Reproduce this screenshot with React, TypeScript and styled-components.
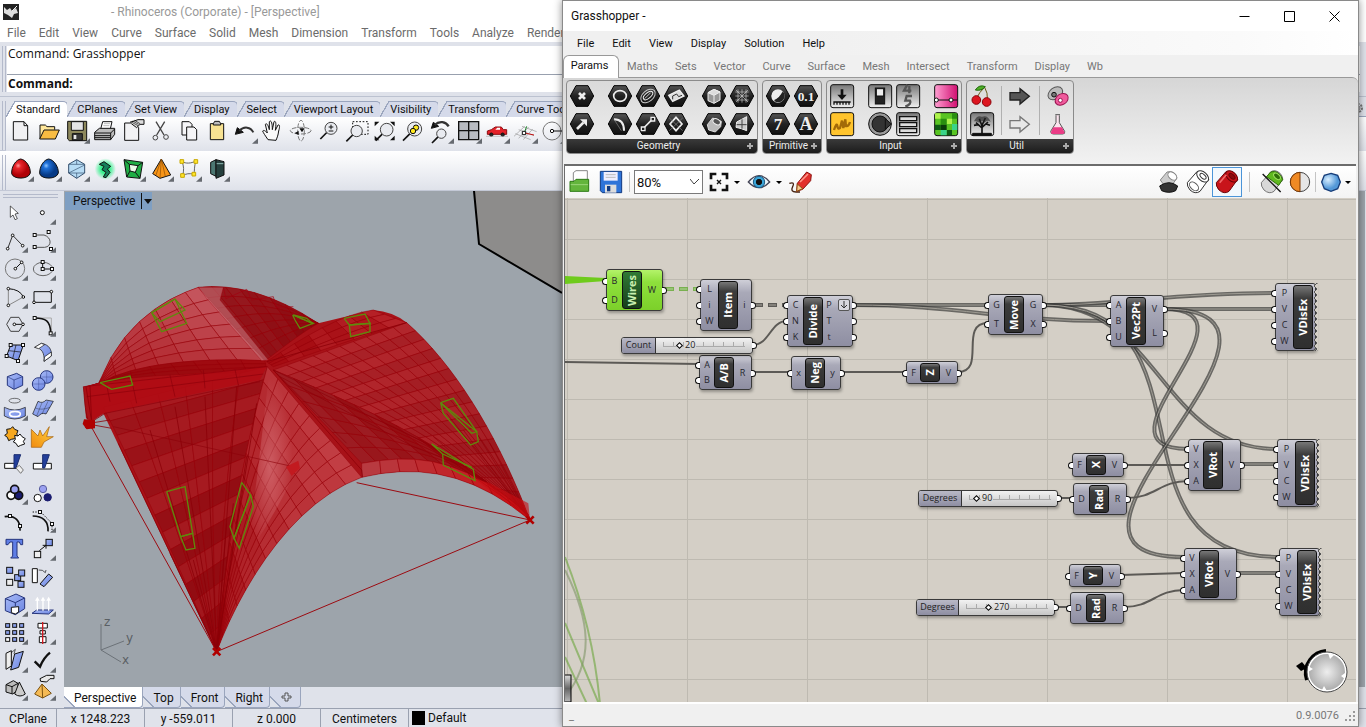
import React from "react";
import styled, { createGlobalStyle, css } from "styled-components";

const Global = createGlobalStyle`
  *, *::before, *::after { box-sizing: border-box; }
  body { margin: 0; background: #dfe2ea; font-family: Roboto, "Open Sans", sans-serif; font-size: 12px; color: #111; overflow: hidden; }
  button { font: inherit; color: inherit; background: none; border: 0; padding: 0; margin: 0; }
  svg { display: block; flex: none; }
`;

/* ---------- shared ---------- */

const Desktop = styled.div`
  position: relative;
  display: flex;
  flex-direction: column;
  height: 100vh;
  overflow: hidden;
`;

const Icon84 = styled.svg.attrs({ viewBox: "0 0 84 84", fill: "none", stroke: "#111", strokeWidth: 3 })`
  width: 28px;
  height: 28px;
`;

const ToolButton = styled.button`
  display: block;
  width: 28px;
  height: 28px;
  flex: none;
`;

type Glyph = { name: string; art: React.ReactNode; fly?: boolean };

const Tool = ({ name, art, fly }: Glyph) => (
  <ToolButton aria-label={name}>
    <Icon84>
      {art}
      {fly && <path d="M84 64V80H66Z" fill="#666a70" stroke="none" />}
    </Icon84>
  </ToolButton>
);

/* ---------- modelling window ---------- */

const RhinoTitle = styled.header`
  display: flex;
  align-items: center;
  height: 24px;
  padding-left: 3px;
  gap: 92px;
  background: #fff;
  color: #999;
  flex: none;
`;

const RhinoMenu = styled.nav`
  display: flex;
  gap: 13px;
  height: 18px;
  padding-left: 7px;
  background: #fff;
  color: #6b6b6b;
  white-space: nowrap;
  flex: none;
`;

const Grip = styled.div`
  border: solid #b4bacb;
  border-width: 0 1px;
  width: 4px;
  flex: none;
  margin: 0 1px 0 2px;
`;

const CommandArea = styled.section`
  display: flex;
  height: 55px;
  padding: 4px 6px 4px 0;
  border-bottom: 1px solid #bcc2d0;
  background: #dfe2ea;
  flex: none;
`;
const CommandStack = styled.div`
  display: flex;
  flex-direction: column;
  flex: 1;
  background: #fff;
`;
const History = styled.p`
  margin: 0;
  height: 29px;
  padding: 0 1px;
  border-bottom: 1px solid #98a0ae;
  font: 12px/16px "Open Sans", sans-serif;
`;
const Prompt = styled.label`
  display: flex;
  padding: 0 1px;
  font: 700 12px/17px "Open Sans", sans-serif;
  input { flex: 1; border: 0; padding: 0 4px; background: none; outline: 0; font: inherit; }
`;

const Bar = styled.section<{ $h: number; $light?: boolean }>`
  display: flex;
  height: ${p => p.$h}px;
  border-bottom: 1px solid #c3c8d6;
  background: ${p => (p.$light ? "linear-gradient(#fff, #dfe2ea)" : "#dfe2ea")};
  padding-top: 4px;
  flex: none;
`;
const BarBody = styled.div`
  flex: 1;
  min-width: 0;
`;
const ToolTabs = styled.div`
  display: flex;
  height: 16px;
  border-bottom: 1px solid #9aa5bd;
  font-size: 11px;
  line-height: 15px;
  white-space: nowrap;
  > svg { margin-left: auto; }
`;
const ToolTab = styled.button<{ $on?: boolean }>`
  position: relative;
  height: 16px;
  padding: 0 7px 0 9px;
  border-top: 1px solid #9aa5bd;
  border-right: 1px solid #9aa5bd;
  border-radius: 0 5px 0 0;
  background: ${p => (p.$on ? "#fff" : "#d5daea")};
  z-index: 0;
  &::before {
    content: "";
    position: absolute;
    left: -1px;
    top: -1px;
    width: 9px;
    height: 16px;
    background: linear-gradient(120deg, #dfe2ea 46%, #9aa5bd 47%, #9aa5bd 54%, ${p => (p.$on ? "#fff" : "#d5daea")} 55%);
    z-index: -1;
  }
`;
const IconRow = styled.div<{ $white?: boolean }>`
  display: flex;
  height: 34px;
  background: ${p => (p.$white ? "linear-gradient(#fff, #dfe2ea)" : "none")};
  margin-left: -1px;
`;

const Work = styled.main`
  display: flex;
  flex: 1;
  min-height: 0;
`;
const Side = styled.aside`
  width: 64px;
  flex: none;
  background: #dfe2ea;
`;
const SideGrip = styled.div`
  height: 4px;
  margin: 3px 6px 0 3px;
  border: solid #b4bacb;
  border-width: 1px 0;
`;
const SideGrid = styled.div`
  display: grid;
  grid-template-columns: 28px 28px;
  grid-auto-rows: 28px;
`;
const ViewColumn = styled.div`
  display: flex;
  flex-direction: column;
  flex: 1;
  min-width: 0;
`;
const Viewport = styled.div`
  position: relative;
  flex: 1;
  min-height: 0;
  overflow: hidden;
  background: #9da4ab;
  margin-right: 1px;
`;
const ViewLabel = styled.button`
  position: absolute;
  left: 1px;
  top: 1px;
  display: flex;
  align-items: center;
  gap: 6px;
  height: 18px;
  padding: 0 0 0 8px;
  background: #7f9fc2;
  svg { border-left: 1px solid #111; }
`;
const ViewTabs = styled.div`
  display: flex;
  height: 21px;
  flex: none;
  line-height: 22px;
`;
const ViewTab = styled.button<{ $on?: boolean }>`
  height: 21px;
  padding: 0 6px 0 10px;
  border-right: 1px solid #9aa5bd;
  border-bottom: 1px solid #9aa5bd;
  border-radius: 0 0 4px 0;
  background: linear-gradient(45deg, #dfe2ea 7px, #9aa5bd 7px, #9aa5bd 8px, ${p => (p.$on ? "#fff" : "#d5daea")} 8px);
`;
const Status = styled.footer`
  display: flex;
  height: 19px;
  border-top: 1px solid #9aa1b0;
  background: #e0e3eb;
  flex: none;
  line-height: 20px;
`;
const Cell = styled.span<{ $w: number }>`
  width: ${p => p.$w}px;
  text-align: center;
  border-right: 1px solid #9aa1b0;
`;
const Layer = styled.span`
  display: flex;
  align-items: center;
  gap: 3px;
  padding-left: 3px;
  &::before { content: ""; width: 13px; height: 14px; background: #000; }
`;

/* ---------- toolbar glyphs ---------- */

const lens = (cx: number, cy: number, r = 16) => (
  <>
    <path d={`M${cx - r * 0.7} ${cy + r * 0.7}L${cx - r - 14} ${cy + r + 14}`} strokeWidth={5} />
    <circle cx={cx} cy={cy} r={r} fill="#e9ebf0" stroke="#444" />
  </>
);

const standardTools: Glyph[] = [
  { name: "New", art: <path d="M22 14H54L65 26V69H22ZM54 14V26H65" fill="#f0f0f2" /> },
  { name: "Open", art: <><path d="M18 64V24H34L39 29H62V38" fill="#ffe79b" /><path d="M17 66L30 39H76L64 66Z" fill="#f8bc42" /></> },
  { name: "Save", fly: true, art: <><path d="M17 13H74V71H22L17 66Z" fill="#8d885c" /><path d="M28 14H64V40H28Z" fill="#e4e4e6" /><path d="M31 50H61V70H31Z" fill="#3a3a3a" /><path d="M35 54H43V66H35Z" fill="#e8e8e8" stroke="none" /></> },
  { name: "Print", art: <><path d="M32 36L38 14H66L60 40Z" fill="#fff" /><path d="M42 20H60M40 26H58" stroke="#999" strokeWidth={2} /><path d="M14 46L28 34H74V52L62 68H14Z" fill="#bbb" /><path d="M14 48H62L74 36M14 56H62M62 48V68M14 62H60" /></> },
  { name: "Properties", art: <><path d="M20 18H50L62 32V70H20Z" fill="#f2f2f4" /><path d="M36 16L60 8H78V22H66L56 32L40 20" fill="#ddd" /><path d="M38 14L60 26M44 12L62 22M50 10L66 20" strokeWidth={2} /></> },
  { name: "Cut", art: <><path d="M30 14L54 54M56 14L32 54" stroke="#444" strokeWidth={4} /><circle cx="28" cy="62" r="7" stroke="#444" /><circle cx="60" cy="60" r="7" stroke="#444" /></> },
  { name: "Copy", art: <><path d="M24 14H46L54 22V54H24Z" fill="#f5f5f7" /><path d="M38 30H60L68 38V69H38Z" fill="#f5f5f7" /></> },
  { name: "Paste", art: <><path d="M25 20H65V68H25Z" fill="#f7e292" /><path d="M34 20L38 13H52L56 20V24H34Z" fill="#bbb" /></> },
  { name: "Undo", fly: true, art: <><path d="M16 52L22 32L40 46Z" fill="#111" /><path d="M28 42C42 26 62 30 70 46" strokeWidth={6} stroke="#333" /></> },
  { name: "Pan", art: <path d="M30 68C22 56 16 48 14 42C18 38 22 42 28 48L22 22C26 18 30 22 34 38L34 14C38 9 43 13 43 38L48 14C52 11 56 15 52 40L60 24C64 22 67 26 62 42C60 56 58 60 54 70Z" fill="#fafafa" /> },
  { name: "Rotate view", art: <><ellipse cx="44" cy="41" rx="31" ry="10" stroke="#777" strokeDasharray="14 5" /><ellipse cx="45" cy="41" rx="10" ry="31" stroke="#777" strokeDasharray="14 5" /><path d="M40 34L56 34L48 46ZM26 48L38 42V54Z" fill="#111" stroke="none" /></> },
  { name: "Zoom dynamic", art: <>{lens(51, 34, 18)}<path d="M44 30H58M51 23V37M44 42H58" strokeWidth={3} /></> },
  { name: "Zoom window", art: <><path d="M32 14H78V52H32Z" strokeDasharray="5 5" />{lens(44, 42, 17)}</> },
  { name: "Zoom extents", art: <>{lens(50, 38, 19)}<path d="M14 14H28L14 28ZM74 14H60L74 28ZM14 70H28L14 56ZM74 70H60L74 56Z" fill="#111" stroke="none" /></> },
  { name: "Zoom selected", art: <>{lens(50, 36, 21)}<circle cx="54" cy="32" r="8" fill="#ffe81f" /><circle cx="45" cy="42" r="8" fill="#ffe81f" /></> },
  { name: "Undo view", fly: true, art: <>{lens(46, 50, 14)}<path d="M16 34L22 16L38 28Z" fill="#111" /><path d="M26 24C40 10 60 14 68 28" strokeWidth={7} stroke="#333" /></> },
  { name: "Four views", fly: true, art: <><path d="M14 14H74V68H14Z" fill="#b9bcc2" strokeWidth={4} /><path d="M44 14V68M14 41H74" strokeWidth={4} /></> },
  { name: "Shade car", fly: true, art: <><path d="M16 52V42L28 38L40 30H58L64 38H74V52Z" fill="#e5222a" stroke="#8d0c10" /><path d="M40 38L46 32H54V38Z" fill="#fff" stroke="none" /><circle cx="28" cy="53" r="5" fill="#222" /><circle cx="62" cy="53" r="5" fill="#222" /><path d="M12 58H78" stroke="#aaa" strokeWidth={2} /></> },
  { name: "CPlane", fly: true, art: <><path d="M12 58L44 28M26 64L56 30M40 68L68 36M36 28L80 44M26 38L72 56M16 50L62 68" stroke="#999" strokeWidth={2} /><path d="M42 50L50 28" stroke="#1c8a2c" /><path d="M44 48L72 54" stroke="#c01010" /><path d="M37 43H47V53H37Z" fill="#fff" /></> },
  { name: "Circle", fly: true, art: <><circle cx="42" cy="42" r="27" stroke="#777" /><path d="M42 42H72" /><circle cx="42" cy="42" r="5" fill="#fff" /></> },
];

const renderTools: Glyph[] = [
  { name: "Red shade", fly: true, art: <path d="M17 56C16 34 30 14 44 12C60 14 74 36 73 54C68 74 22 74 17 56Z" fill="url(#gRed)" /> },
  { name: "Blue shade", fly: true, art: <path d="M17 56C16 34 30 14 44 12C60 14 74 36 73 54C68 74 22 74 17 56Z" fill="url(#gBlue)" /> },
  { name: "Wireframe", fly: true, art: <><path d="M44 14L68 28V54L44 70L20 54V28Z" fill="#b7dcf5" stroke="#35506e" /><path d="M20 28H68M20 54L68 30M20 54H68M44 14V28M44 54V70" stroke="#35506e" strokeWidth={2} /></> },
  { name: "Emap", fly: true, art: <><circle cx="46" cy="42" r="32" fill="url(#gGlow)" stroke="none" /><path d="M28 28L42 20L62 34L52 42L60 52L48 68L40 66L48 52L36 44L42 34Z" fill="#157f5a" /></> },
  { name: "Box edit", fly: true, art: <><path d="M18 14L74 22L66 70L26 66Z" fill="#1fae45" /><path d="M34 28L60 32L52 52L36 48Z" fill="#eafbe9" /><path d="M18 14L34 28M74 22L60 32M66 70L52 52M26 66L36 48" /></> },
  { name: "Pyramid", fly: true, art: <><path d="M46 12L74 60L42 70L20 56Z" fill="#f79417" /><path d="M46 12L42 70M46 12L30 60M46 12L58 64" stroke="#8a4c04" strokeWidth={2} /></> },
  { name: "Cage", fly: true, art: <><path d="M24 20C36 26 50 26 66 18C60 34 62 46 60 58C46 54 36 56 26 62C30 46 30 34 24 20Z" stroke="#666" /><path d="M18 14H29V25H18ZM60 14H71V25H60ZM54 52H65V63H54ZM20 56H31V67H20Z" fill="#ffe52a" stroke="#c8a800" /></> },
  { name: "Layers", fly: true, art: <><path d="M26 22L42 14V64L26 56Z" fill="#4c7772" /><path d="M42 14L66 20V60L42 70Z" fill="#26403e" /><path d="M44 26L64 26" stroke="#8fb8b4" /></> },
];

const dot = (x: number, y: number) => <circle cx={x} cy={y} r="4" fill="#fff" />;
const sq = (x: number, y: number, s = 9) => <rect x={x - s / 2} y={y - s / 2} width={s} height={s} fill="#fff" />;
const BLUE = "url(#gPale)";

const sideTools: Glyph[] = [
  { name: "Select", art: <path d="M31 24L55 46L45 48L52 62L45 65L39 51L31 58Z" fill="#fff" strokeWidth={2} /> },
  { name: "Point", fly: true, art: <circle cx="43" cy="44" r="6" fill="#fff" /> },
  { name: "Polyline", fly: true, art: <><path d="M23 68L38 28L68 59" stroke="#333" />{dot(23, 68)}{dot(38, 28)}{dot(68, 59)}</> },
  { name: "Curve", fly: true, art: <><path d="M20 27H48C72 34 72 62 50 64H20" stroke="#555" />{sq(20, 27)}{sq(62, 18)}{sq(20, 63)}{sq(69, 69)}</> },
  { name: "Circle", fly: true, art: <><circle cx="45" cy="44" r="29" stroke="#777" /><path d="M46 44L65 25" />{dot(46, 44)}{dot(65, 25)}</> },
  { name: "Ellipse", fly: true, art: <><ellipse cx="45" cy="45" rx="29" ry="20" stroke="#666" /><path d="M44 24V45H72" />{sq(44, 24)}{sq(44, 45)}{sq(72, 45)}</> },
  { name: "Arc", fly: true, art: <><path d="M25 20V70L70 45" stroke="#888" /><path d="M25 20Q60 22 70 45" />{dot(25, 20)}{dot(25, 70)}{dot(70, 45)}</> },
  { name: "Rectangle", fly: true, art: <><path d="M18 29H70V61H18Z" />{dot(70, 29)}{dot(18, 61)}</> },
  { name: "Polygon", fly: true, art: <><path d="M20 43L32 22H57L69 43L57 64H32Z" stroke="#444" /><path d="M43 43H69" />{dot(43, 43)}{dot(69, 43)}</> },
  { name: "Fillet", fly: true, art: <><path d="M20 24H70V70" stroke="#aaa" /><path d="M20 24C52 24 68 32 68 70" strokeWidth={5} />{sq(20, 24)}{sq(68, 70)}</> },
  { name: "Surface", fly: true, art: <><path d="M32 21H70L54 68L20 54Z" fill={BLUE} /><path d="M26 38L62 42M48 21L38 62" strokeWidth={2} />{sq(32, 21)}{sq(69, 21)}{sq(20, 54)}{sq(54, 69)}</> },
  { name: "Sweep", fly: true, art: <><path d="M20 28L40 16C64 20 72 36 70 54L48 70C50 46 42 30 20 28Z" fill={BLUE} strokeWidth={2} /><path d="M20 28L40 16L50 20L32 32ZM50 56L70 42V54L48 70Z" fill="#fff" strokeWidth={2} /></> },
  { name: "Box", fly: true, art: <><path d="M22 32L50 22L68 32V58L42 70L22 58Z" fill={BLUE} stroke="#26357c" /><path d="M22 32L42 42L68 32M42 42V70" stroke="#26357c" strokeWidth={2} /></> },
  { name: "Spheres", fly: true, art: <><circle cx="56" cy="33" r="19" fill={BLUE} stroke="#26357c" /><circle cx="32" cy="54" r="19" fill={BLUE} stroke="#26357c" /><path d="M14 54H50M32 36V72M40 33H74M56 15V50" stroke="#26357c" strokeWidth={1} /></> },
  { name: "Revolve", fly: true, art: <><ellipse cx="44" cy="20" rx="17" ry="7" stroke="#333" strokeWidth={2} /><path d="M13 40V66Q44 84 76 66V40Q44 56 13 40Z" fill={BLUE} strokeWidth={2} /><ellipse cx="45" cy="60" rx="16" ry="8" stroke="#fff" strokeWidth={5} /></> },
  { name: "Patch", fly: true, art: <><path d="M30 22Q44 30 54 18L76 22L54 60Q40 54 30 68L14 60Z" fill={BLUE} strokeWidth={2} /><path d="M22 42Q40 50 66 40M42 26L26 66M60 22L42 60" strokeWidth={1} /></> },
  { name: "Puzzle", art: <><path d="M20 22L32 20L38 14L44 22L54 26L50 36L56 44L44 50L34 52L26 56L22 46L14 40L22 34Z" fill="#f6a820" /><path d="M44 40L54 42L60 36L66 44L76 50L70 58L74 66L62 70L54 74L48 64L40 60L46 52Z" fill="#fff" /></> },
  { name: "Explode", art: <path d="M10 22L30 42L36 24L44 42L64 14L56 44L76 44L48 60L40 76H10Z" fill="url(#gFire)" stroke="#a35c08" strokeWidth={2} /> },
  { name: "Trim", art: <><path d="M14 40H48V55H14Z" fill="#fff" /><path d="M42 14H62L48 54H42Z" fill="#233f9b" stroke="#1a2d70" /><path d="M48 54L58 46L70 60L62 70Z" fill="#eee" stroke="#777" /></> },
  { name: "Split", art: <><path d="M16 40H70V57H16Z" fill="#fff" /><path d="M44 14H64L50 54H44Z" fill="#233f9b" stroke="#1a2d70" /></> },
  { name: "Boolean", fly: true, art: <><circle cx="33" cy="52" r="12" fill="#fff" strokeWidth={5} /><circle cx="56" cy="52" r="12" fill="#1a1c70" strokeWidth={5} /><circle cx="44" cy="34" r="12" fill="#9aa0f0" strokeWidth={5} /></> },
  { name: "Group", art: <><circle cx="45" cy="33" r="11" fill="#9aa0f0" stroke="#5a5f9f" /><circle cx="29" cy="60" r="11" fill="#fff" /><circle cx="59" cy="58" r="11" fill="#1a1c70" stroke="#1a1c70" /></> },
  { name: "Edit points", art: <><path d="M14 32C46 26 62 46 60 74" strokeWidth={5} />{sq(30, 30)}{sq(60, 60)}</> },
  { name: "Control points", fly: true, art: <><path d="M14 18H38L72 52V78" strokeDasharray="4 4" /><path d="M14 30C44 30 62 46 60 76" strokeWidth={5} />{sq(36, 18)}{sq(72, 54)}</> },
  { name: "Text", art: <path d="M18 16H68V32H62L58 24H51V66L56 72H32L38 66V24H30L24 32H18Z" fill="#5f7ee6" stroke="#26357c" /> },
  { name: "Move", fly: true, art: <><path d="M34 50L54 34M44 34H54V44" /><rect x="19" y="52" width="19" height="19" fill="#eee" /><rect x="54" y="16" width="19" height="19" fill={BLUE} /></> },
  { name: "Copy", art: <>{[[20, 16], [44, 38], [56, 24], [54, 58]].map(([x, y]) => <rect key={x} x={x} y={y} width="18" height="18" fill={BLUE} />)}<rect x="20" y="52" width="18" height="18" fill="#eee" /></> },
  { name: "Rotate", art: <><path d="M13 20H28V62H13Z" fill="#fff" /><path d="M32 24Q44 22 52 32L54 24" strokeWidth={2} /><path d="M36 66L62 36L74 46L48 74Z" fill={BLUE} /></> },
  { name: "Solid", fly: true, art: <><path d="M16 26L48 12L74 24V56L46 74L16 62Z" fill={BLUE} stroke="#26357c" /><path d="M16 26L46 38L74 24M46 38V48" stroke="#26357c" /><path d="M34 52L56 50V66L46 72L34 68Z" fill="#fff" /></> },
  { name: "Extrude", fly: true, art: <><path d="M12 70L26 60H76L62 72Z" fill={BLUE} stroke="#26357c" /><path d="M28 62V28M45 62V28M62 62V28" stroke="#fff" strokeWidth={4} /><path d="M21 32L28 20L35 32ZM38 32L45 20L52 32ZM55 32L62 20L69 32Z" fill="#fff" stroke="none" /></> },
  { name: "Array", fly: true, art: <>{[17, 38, 59].flatMap(x => [17, 38, 59].map(y => <rect key={`${x}-${y}`} x={x} y={y} width="12" height="11" fill={x === 17 && y === 59 ? "#fff" : BLUE} />))}</> },
  { name: "Align", fly: true, art: <><path d="M30 16H58V30H30ZM36 38H52V48H36ZM34 56H54V74H34Z" fill="#fff" /><path d="M44 12V78" stroke="#d01820" strokeWidth={4} /></> },
  { name: "Bend", fly: true, art: <><path d="M18 22L34 14V60L18 70Z" fill="#eee" /><path d="M44 24L70 16L56 64L32 72Z" fill={BLUE} /><path d="M34 20L46 10L42 24" strokeWidth={2} /></> },
  { name: "Check", fly: true, art: <path d="M20 46L36 62Q48 34 66 20" strokeWidth={7} /> },
  { name: "Shapes", fly: true, art: <><path d="M18 32L40 20L54 28V48L38 60L18 54Z" fill="#bbb" /><path d="M18 32L36 38L54 28M36 38V60" /><path d="M58 24L76 60Q60 72 44 60Z" fill="#ccc" /></> },
  { name: "Render", fly: true, art: <><path d="M42 30L70 58L44 72L20 60Z" fill="#f5ba54" stroke="#7b5210" /><path d="M42 30L44 72" stroke="#7b5210" /><path d="M36 14L56 4H78V14H66L56 24L38 22Z" fill="#e8e8e8" /></> },
];

/* ---------- shell model drawing ---------- */

type Pt = [number, number];
type Curve = [Pt, Pt, Pt, Pt];

const at = (c: Curve, t: number): Pt => {
  const k = 1 - t;
  const w = [k * k * k, 3 * k * k * t, 3 * k * t * t, t * t * t];
  return [0, 1].map(a => c.reduce((s, p, i) => s + p[a] * w[i], 0)) as Pt;
};
const between = (a: Pt, b: Pt, v: number): Pt => [a[0] + (b[0] - a[0]) * v, a[1] + (b[1] - a[1]) * v];
const shade = (a: number[], b: number[], v: number) => `rgb(${a.map((x, i) => Math.round(x + (b[i] - x) * v)).join(",")})`;

type PatchProps = { a: Curve; b: Curve; rows: number; cols: number; near: number[]; far: number[]; checks?: number };

const Patch = ({ a, b, rows, cols, near, far, checks = 0 }: PatchProps) => {
  const cells: React.ReactNode[] = [];
  for (let r = 0; r < rows; r++) {
    for (let c = 0; c < cols; c++) {
      const [t0, t1, v0, v1] = [r / rows, (r + 1) / rows, c / cols, (c + 1) / cols];
      const q = [between(at(a, t0), at(b, t0), v0), between(at(a, t0), at(b, t0), v1), between(at(a, t1), at(b, t1), v1), between(at(a, t1), at(b, t1), v0)];
      const mix = Math.min(1, Math.max(0, (r + c * 0.6) / (rows + cols * 0.6) + (r % 2 ? checks : -checks)));
      cells.push(<polygon key={`${r}-${c}`} points={q.map(p => p.map(n => n.toFixed(1)).join(",")).join(" ")} fill={shade(near, far, mix)} />);
    }
  }
  return <g stroke="#960009" strokeWidth="2" strokeOpacity=".75">{cells}</g>;
};

const valley: Curve = [[622, 290], [570, 480], [505, 760], [470, 1145]];
const leftEdge: Curve = [[130, 412], [230, 610], [360, 900], [470, 1145]];
const frontArc: Curve = [[905, 622], [690, 700], [540, 960], [470, 1145]];
const innerArc: Curve = [[905, 580], [1070, 550], [1210, 560], [1405, 735]];
const outerArc: Curve = [[905, 622], [1080, 580], [1240, 610], [1410, 750]];
const rightValley: Curve = [[640, 300], [880, 400], [1130, 500], [1405, 735]];
const rightEdge: Curve = [[1040, 158], [1190, 290], [1320, 510], [1410, 750]];
const backArc: Curve = [[415, 52], [330, 80], [190, 150], [118, 335]];
const backFoot: Curve = [[615, 272], [420, 262], [220, 280], [118, 340]];
const farArc: Curve = [[415, 52], [520, 40], [640, 70], [775, 160]];
const farFoot: Curve = [[615, 272], [660, 240], [720, 190], [775, 160]];
const crown: Curve = [[620, 275], [730, 200], [850, 130], [940, 120]];

const greenFrames = [
  "275,128 345,87 375,120 300,155", "345,87 380,160 305,185 275,128", "120,338 210,318 218,345 155,358",
  "698,135 760,160 720,175 705,150", "700,135 740,145 760,162", "852,145 915,132 930,160 868,165", "868,165 872,200 930,185 930,160",
  "1142,398 1180,385 1250,485 1235,490", "1142,398 1150,430 1232,525 1255,515 1250,485",
  "1115,522 1240,598 1245,632 1150,585 1148,552", "1148,552 1236,592",
  "320,665 375,650 398,790 362,800", "362,800 378,840 405,835 398,790",
  "545,637 572,675 522,805 510,770", "572,675 580,710 538,835 522,805",
];

const foot = (x: number, y: number) => <path key={x} d={`M${x - 11} ${y - 11}L${x + 11} ${y + 11}M${x + 11} ${y - 11}L${x - 11} ${y + 11}`} stroke="#b00000" strokeWidth="8" />;

const Shell = () => (
  <svg width="498" height="496" viewBox="64 191 498 496" fill="none" aria-label="Vaulted shell">
    <path d="M474 191L479 244L562 293V191Z" fill="#8d8c8b" />
    <path d="M474 191L479 244L562 293" stroke="#000" strokeWidth="2" />
    <g transform="translate(60 270) scale(0.33333)">
      <path d="M470 1145L130 430L95 455L78 445L70 350L118 338C190 150 330 80 415 52C520 40 640 70 775 160L940 120Q1000 125 1040 158C1190 290 1320 510 1410 750C1240 610 1080 580 905 622C690 700 540 960 470 1145Z" fill="#a81218" />
      <Patch a={backArc} b={backFoot} rows={7} cols={6} near={[196, 84, 92]} far={[168, 16, 22]} />
      <Patch a={backFoot} b={[[620, 300], [470, 320], [250, 300], [80, 350]]} rows={8} cols={3} near={[162, 10, 16]} far={[146, 10, 14]} />
      <Patch a={farArc} b={farFoot} rows={8} cols={7} near={[150, 26, 32]} far={[138, 6, 12]} checks={0.1} />
      <path d="M415 52L440 85L605 272L625 270L480 90L490 52Z" fill="#c36f77" fillOpacity=".6" stroke="#a30010" />
      <path d="M490 52L498 86L560 58L575 90L640 80L648 112L700 110" stroke="#a30010" strokeWidth="2" />
      <Patch a={crown} b={[[640, 290], [760, 250], [900, 200], [1040, 158]]} rows={8} cols={3} near={[166, 12, 18]} far={[182, 34, 40]} checks={0.2} />
      <Patch a={rightValley} b={rightEdge} rows={17} cols={10} near={[178, 38, 44]} far={[154, 24, 30]} checks={0.2} />
      <Patch a={innerArc} b={rightValley} rows={12} cols={6} near={[156, 28, 34]} far={[146, 8, 12]} checks={0.2} />
      <Patch a={outerArc} b={innerArc} rows={9} cols={1} near={[184, 58, 64]} far={[204, 10, 14]} />
      <Patch a={leftEdge} b={valley} rows={15} cols={6} near={[166, 26, 32]} far={[146, 12, 18]} checks={0.4} />
      <path d="M74 350L118 340L620 290L600 330L135 430L95 450Z" fill="#b20c14" fillOpacity=".85" />
      <path d="M70 350L620 290M80 380L610 312M135 430L600 335M140 345L150 395M215 330L230 400M330 315L345 380M430 300L435 355M525 298L535 345" stroke="#8c000a" strokeWidth="2" />
      <Patch a={frontArc} b={valley} rows={13} cols={9} near={[194, 62, 68]} far={[156, 6, 12]} checks={0.05} />
      <path d="M650 320Q720 470 690 640Q640 740 560 860Q590 640 625 330Z" fill="url(#gShine)" />
      <g stroke="#8c0008" strokeWidth="3" strokeOpacity=".8">
        <path d="M470 1145L175 520M470 1145L270 480M470 1145L345 410M470 1145L435 380M470 1145L530 350M470 1145L590 400M470 1145L560 560" />
        <path d="M470 1145L330 850M470 1145L400 870M470 1145L500 760M470 1145L520 700" />
        <path d="M640 300L905 600L908 622M620 275L1040 158M70 350C75 400 75 430 88 460M78 350L95 455M90 348L95 455M88 460L135 430M88 460L150 450M100 465L155 475" />
        <path d="M160 470L700 590M1410 750L1160 430M1410 750L1210 480M1410 750L1250 490M1410 750L1290 520M1410 750L1120 500" strokeOpacity=".6" />
        <path d="M640 300L1100 520L1405 735M660 320L1060 530L1240 600M650 310L860 520" strokeOpacity=".6" />
      </g>
      <path d="M1290 640L1405 700L1410 750L1240 625Z" fill="#cc0d12" fillOpacity=".6" />
      <path d="M678 590L715 572L720 595L695 618Z" fill="#c21a20" />
      <path d="M88 460L470 1145L1410 750L890 638" stroke="#9c0a10" strokeWidth="3" />
      <path d="M72 448L105 450L105 475L80 478L68 462Z" fill="#b00000" />
      {foot(88, 463)}{foot(470, 1145)}{foot(1410, 750)}
      <g stroke="#5f8a0c" strokeWidth="4">
        {greenFrames.map(p => <polyline key={p} points={p + " " + p.split(" ")[0]} />)}
      </g>
    </g>
    <path d="M101 624V650L124 641M101 650L121 662" stroke="#6c7278" />
    <g fill="#5a5f63" fontFamily="DejaVu Sans, sans-serif" fontSize="12">
      <text x="104" y="626">z</text><text x="126" y="642">y</text><text x="122" y="664">x</text>
    </g>
  </svg>
);

/* ---------- node editor window ---------- */

const Window = styled.section`
  position: absolute;
  left: 562px;
  right: 7px;
  top: 0;
  bottom: 0;
  display: flex;
  flex-direction: column;
  border: 1px solid #8a8a8a;
  background: #f0f0f0;
  box-shadow: 0 0 8px rgba(0, 0, 0, 0.45);
`;
const WinTitle = styled.header`
  display: flex;
  align-items: center;
  height: 30px;
  padding: 0 18px 0 8px;
  background: #fff;
  flex: none;
  span { flex: 1; }
`;
const WinButtons = styled.div`
  display: flex;
  gap: 33px;
`;
const WinMenu = styled.nav`
  display: flex;
  align-items: center;
  gap: 18px;
  height: 24px;
  padding-left: 14px;
  font-size: 11px;
  background: linear-gradient(90deg, #f0f0f0 30%, #fafafa 85%, #fff);
  flex: none;
`;
const RibbonTabs = styled.div`
  display: flex;
  gap: 17px;
  height: 22px;
  font-size: 11px;
  line-height: 24px;
  color: #777;
  flex: none;
`;
const RibbonTab = styled.button<{ $on?: boolean }>`
  ${p => p.$on && css`
    width: 56px;
    height: 23px;
    margin-right: -9px;
    border: 1px solid #999;
    border-bottom: 0;
    border-radius: 6px 6px 0 0;
    background: #fff;
    color: #111;
    line-height: 18px;
    padding: 0 3px 3px 0;
    z-index: 1;
  `}
`;
const Ribbon = styled.div`
  display: flex;
  align-items: flex-start;
  gap: 4px;
  height: 87px;
  padding: 2px 3px;
  border-top: 1px solid #999;
  border-radius: 0 6px 0 0;
  background: linear-gradient(#d6d6d6, #f2f2f2);
  flex: none;
`;
const Panel = styled.section`
  border: 1px solid #8b8b8b;
  border-radius: 4px;
  overflow: hidden;
  background: linear-gradient(#dadada, #efefef);
`;
const PanelGrid = styled.div`
  display: flex;
  gap: 10px;
  height: 58px;
  padding: 1px 1px 0 1px;
`;
const PanelGroup = styled.div<{ $cols: number }>`
  position: relative;
  display: grid;
  grid-template-columns: repeat(${p => p.$cols}, 28px);
  grid-auto-rows: 28px;
  & + &::before {
    content: "";
    position: absolute;
    left: -5px;
    top: 4px;
    bottom: 4px;
    border-left: 1px solid #b0b0b0;
  }
`;
const Caption = styled.h2`
  display: flex;
  margin: 0;
  height: 14px;
  padding: 0 3px;
  background: linear-gradient(#3a3a3a, #1c1c1c);
  color: #eee;
  font: 10px/13px Roboto, sans-serif;
  span { flex: 1; text-align: center; }
  svg { margin-top: 4px; }
`;

const Hex = ({ children }: { children: React.ReactNode }) => (
  <Icon84>
    <path d="M7 42L24 11H60L77 42L60 73H24Z" fill="url(#gHex)" stroke="#000" strokeWidth="3" />
    <g stroke="#eee">{children}</g>
  </Icon84>
);
const Tile = ({ children, fill = "url(#gTile)" }: { children: React.ReactNode; fill?: string }) => (
  <Icon84>
    <rect x="8" y="8" width="69" height="69" rx="7" fill={fill} stroke="#111" strokeWidth="3" />
    {children}
  </Icon84>
);
const letter = (s: string, size = 44) => (
  <text x="42" y={42 + size * 0.34} textAnchor="middle" fontSize={size} fontWeight="700" fontFamily="Liberation Serif, serif" fill="#eee" stroke="none">{s}</text>
);

type PanelData = { title: string; groups: { cols: number; items: React.ReactNode[] }[] };
const panels: PanelData[] = [
  {
    title: "Geometry",
    groups: [
      { cols: 1, items: [<Hex><path d="M33 33L51 51M51 33L33 51" strokeWidth="8" /></Hex>, <Hex><path d="M27 57L46 38" strokeWidth="8" /><path d="M36 28H57V49Z" fill="#eee" stroke="none" /></Hex>] },
      { cols: 3, items: [
        <Hex><ellipse cx="42" cy="42" rx="19" ry="16" strokeWidth="5" /></Hex>,
        <Hex><ellipse cx="42" cy="42" rx="25" ry="16" transform="rotate(-40 42 42)" stroke="#ccc" /><ellipse cx="43" cy="41" rx="17" ry="8" transform="rotate(-40 42 42)" /><path d="M32 50L50 32" stroke="#ccc" /></Hex>,
        <Hex><path d="M20 40L52 24L66 42L32 58Z" strokeWidth="4" fill="#ddd" /><path d="M32 52V42L44 36L50 44L60 40" stroke="#333" strokeWidth="3" /></Hex>,
        <Hex><path d="M24 28C46 28 54 40 54 62" strokeWidth="6" /><path d="M24 28L46 62" stroke="#888" strokeWidth="2" /></Hex>,
        <Hex><path d="M29 54L54 29" strokeWidth="5" /><path d="M22 51H33V62H22ZM51 22H62V33H51Z" fill="#222" strokeWidth="4" /></Hex>,
        <Hex><path d="M42 22L60 42L42 62L24 42Z" strokeWidth="5" /><path d="M22 24L62 62M62 24L22 62" stroke="#888" strokeWidth="2" /></Hex>,
      ] },
      { cols: 2, items: [
        <Hex><path d="M24 32L42 22L60 30V54L42 64L24 56Z" fill="#999" /><path d="M24 32L42 40L60 30L42 22Z" fill="#ddd" /><path d="M42 40V64" /></Hex>,
        <Hex><path d="M30 22V62M42 22V62M54 22V62M22 30H62M22 42H62M22 54H62M24 24L60 60M60 24L24 60" stroke="#ccc" strokeWidth="2" /></Hex>,
        <Hex><path d="M22 44L38 24L64 34L62 50L46 66L26 60Z" fill="#bbb" stroke="#ddd" /><ellipse cx="50" cy="35" rx="12" ry="8" transform="rotate(30 50 35)" fill="#555" /></Hex>,
        <Hex><path d="M26 36L56 20V62L40 56L24 52Z" fill="#ccc" /><path d="M42 28V56M26 44H56" stroke="#444" /></Hex>,
      ] },
    ],
  },
  {
    title: "Primitive",
    groups: [{ cols: 2, items: [
      <Hex><circle cx="42" cy="42" r="18" strokeWidth="4" /><path d="M30 56A19 19 0 0 0 56 28Q50 46 30 56Z" fill="#222" stroke="none" /><path d="M29 55A18 18 0 0 1 42 24L55 29Q48 46 29 55Z" fill="#eee" stroke="none" /></Hex>,
      <Hex>{letter("0.1", 40)}</Hex>, <Hex>{letter("7", 52)}</Hex>, <Hex>{letter("A", 54)}</Hex>,
    ] }],
  },
  {
    title: "Input",
    groups: [
      { cols: 1, items: [
        <Tile><path d="M42 22V40" strokeWidth="8" /><path d="M28 38H56L42 54Z" fill="#111" stroke="none" /><path d="M16 60H68M18 60V68M27 60V68M36 60V68M45 60V68M54 60V68M63 60V68" strokeWidth="4" /></Tile>,
        <Tile fill="#ffc42d"><path d="M18 60Q26 36 28 48T36 54L42 32L46 54L52 28L54 48Q62 50 66 36" stroke="#a36a08" strokeWidth="7" /></Tile>,
      ] },
      { cols: 2, items: [
        <Tile><rect x="28" y="18" width="28" height="48" fill="#222" /><rect x="31" y="20" width="22" height="22" fill="#eee" /></Tile>,
        <Tile><path d="M40 8L30 26H52M46 12V34M54 42H38L34 56H48Q54 66 34 74" stroke="#555" strokeWidth="7" /></Tile>,
        <Icon84><circle cx="42" cy="42" r="34" fill="#999" /><circle cx="42" cy="42" r="24" fill="#333" /><path d="M58 26L76 42L58 58Z" fill="#333" /></Icon84>,
        <Tile><path d="M17 20H68V32H17ZM17 38H68V50H17ZM17 56H68V68H17Z" fill="#ddd" strokeWidth="4" /></Tile>,
      ] },
      { cols: 1, items: [
        <Tile fill="url(#gPink)"><path d="M10 54H76" strokeWidth="3" /><circle cx="13" cy="54" r="6" fill="#fff" /><circle cx="57" cy="54" r="6" fill="#fff" /></Tile>,
        <Tile fill="#58c422"><g stroke="none"><path d="M9 10H26V26H9ZM44 26H60V42H44Z" fill="#aef24c" /><path d="M26 26H44V44H26ZM60 10H76V26H60Z" fill="#2a8f10" /><path d="M9 44H26V60H9ZM44 60H60V76H44Z" fill="#0c5a12" /><path d="M26 60H44V76H26ZM60 42H76V60H60Z" fill="#3ad48a" /><path d="M26 44H44V60H26Z" fill="#0a3c0a" /></g></Tile>,
      ] },
    ],
  },
  {
    title: "Util",
    groups: [
      { cols: 1, items: [
        <Icon84><path d="M50 16Q34 30 26 48M50 16Q60 34 58 50" stroke="#6b5a18" /><path d="M22 24Q34 6 52 14Q40 28 22 24Z" fill="#4fae26" stroke="#226a10" /><circle cx="25" cy="54" r="13" fill="#dd1620" stroke="#8c0008" /><circle cx="56" cy="60" r="13" fill="#dd1620" stroke="#8c0008" /></Icon84>,
        <Tile><path d="M42 74V48M42 54L24 38M42 52L60 36M42 48L34 26M42 46L52 24M30 44L18 46M54 42L66 46" strokeWidth="5" /><path d="M18 34Q26 14 42 20Q60 14 68 36Q58 28 50 38Q42 28 34 38Q26 32 18 34Z" fill="#222" stroke="none" opacity=".6" /><path d="M14 70H70V76H14Z" fill="#111" /></Tile>,
      ] },
      { cols: 1, items: [
        <Icon84><path d="M12 32H42V20L70 43L42 66V54H12Z" fill="#555" stroke="#222" strokeWidth="4" /></Icon84>,
        <Icon84><path d="M12 32H42V20L70 43L42 66V54H12Z" fill="#e8e8e8" stroke="#777" strokeWidth="4" /></Icon84>,
      ] },
      { cols: 1, items: [
        <Icon84><ellipse cx="34" cy="34" rx="24" ry="17" transform="rotate(-35 34 34)" fill="#bbb" stroke="#555" /><circle cx="30" cy="38" r="7" fill="#777" /><ellipse cx="53" cy="52" rx="21" ry="16" transform="rotate(-35 53 52)" fill="#f05a9c" stroke="#9a1450" /><circle cx="49" cy="55" r="6" fill="#fff" stroke="#9a1450" /></Icon84>,
        <Icon84><path d="M34 14H48M36 16V38L20 64Q20 72 28 72H56Q64 72 62 64L46 38V16" fill="#fbe4ee" stroke="#555" /><path d="M28 52H54L62 68Q60 72 54 72H28Q20 72 21 66Z" fill="#ea3d86" stroke="none" /></Icon84>,
      ] },
    ],
  },
];

const CanvasBar = styled.div`
  display: flex;
  align-items: center;
  height: 34px;
  padding: 0 5px 0 1px;
  margin: 0 2px 0 1px;
  border-top: 2px solid #6c6c6c;
  border-left: 1px solid #6c6c6c;
  background: linear-gradient(#fff, #f3f3f3);
  flex: none;
`;
const Divider = styled.i<{ $gap: number }>`
  height: 20px;
  margin: 0 ${p => p.$gap}px;
  border-left: 1px solid #c4c4c4;
`;
const Spring = styled.div`flex: 1;`;
const ZoomBox = styled.label`
  position: relative;
  select {
    appearance: none;
    width: 69px;
    height: 24px;
    border: 1px solid #7a7a7a;
    border-radius: 0;
    background: #fff;
    padding: 0 2px;
    font: 13px Roboto, sans-serif;
    color: #111;
  }
  svg { position: absolute; right: 4px; top: 9px; pointer-events: none; }
`;
const CaretButton = styled.button<{ $before?: number; $after?: number }>`
  display: grid;
  place-items: center;
  width: 6px;
  height: 28px;
  margin: 0 ${p => p.$after || 0}px 0 ${p => p.$before || 0}px;
`;
const PickedTool = styled.div`
  width: 28px;
  height: 28px;
  margin-left: 1px;
  outline: 1px solid #4a94d8;
  background: #f2f8fd;
`;
const Pad = styled.div<{ $w: number }>`width: ${p => p.$w}px;`;

const Caret = ({ before, after }: { before?: number; after?: number }) => (
  <CaretButton aria-label="More" $before={before} $after={after}><svg width="6" height="3"><path d="M0 0H6L3 3Z" fill="#000" /></svg></CaretButton>
);
const can = (body: string, hole: string, line = "#333") => (
  <>
    <path d="M10 44L38 12Q62 4 74 34L48 70Q34 80 18 66Q8 54 10 44Z" fill={body} stroke={line} />
    <ellipse cx="56" cy="25" rx="21" ry="13" transform="rotate(42 56 25)" fill={body} stroke={line} />
    <ellipse cx="57" cy="25" rx="11" ry="6" transform="rotate(42 57 25)" fill={hole} stroke={line} />
  </>
);

const Canvas = styled.div`
  position: relative;
  flex: 1;
  min-height: 0;
  overflow: hidden;
  margin: 0 2px 0 1px;
  border-left: 1px solid #6c6c6c;
  background:
    repeating-linear-gradient(90deg, transparent 0 2px, #bebab1 2px 3px, transparent 3px 120px),
    repeating-linear-gradient(transparent 0 1px, #bebab1 1px 2px, transparent 2px 40px),
    #d4cfc6;
`;
const Wires = styled.svg`
  position: absolute;
  left: 0;
  top: 0;
`;
const WinStatus = styled.footer`
  display: flex;
  align-items: center;
  justify-content: space-between;
  height: 24px;
  padding: 2px 3px 0 6px;
  border-top: 2px solid #fff;
  color: #777;
  font-size: 11px;
  flex: none;
  span:last-child { display: flex; gap: 4px; }
`;

const NodeBox = styled.div<{ $x: number; $y: number; $w: number; $h: number; $cx: number; $green?: boolean }>`
  position: absolute;
  left: ${p => p.$x - 565}px;
  top: ${p => p.$y - 198}px;
  width: ${p => p.$w}px;
  height: ${p => p.$h}px;
  display: grid;
  grid-template-columns: ${p => p.$cx - 1}px 20px 1fr;
  border: 1px solid #3a3a3a;
  border-radius: 3px;
  background: ${p => (p.$green ? "linear-gradient(#b4f36a, #8ee03c 30%, #7cd02a)" : "linear-gradient(#cfcfd8, #a9a9b8 25%, #8e8ea2)")};
  box-shadow: 1px 2px 3px rgba(0, 0, 0, 0.3);
  color: #26262e;
  font: 9px/12px "Open Sans", sans-serif;
`;
const Core = styled.div<{ $green?: boolean }>`
  margin: 1px 0;
  display: grid;
  place-items: center;
  border: 1px solid #111;
  border-radius: 3px;
  background: ${p => (p.$green ? "linear-gradient(#2f7a34, #173c1a)" : "linear-gradient(#777, #3c3c3c 20%, #2f2f2f)")};
  overflow: hidden;
  span {
    writing-mode: vertical-rl;
    transform: rotate(180deg);
    color: ${p => (p.$green ? "#c8f0b0" : "#fff")};
    font: 700 11px/18px "Open Sans", sans-serif;
  }
`;
const Ports = styled.div<{ $room?: boolean }>`
  display: flex;
  flex-direction: column;
  padding: 1px 0;
  span { padding-right: ${p => (p.$room ? 17 : 0)}px; }
`;
const Port = styled.span<{ $side: "left" | "right" }>`
  position: relative;
  display: flex;
  align-items: center;
  justify-content: center;
  flex: 1;
  &::before {
    content: "";
    position: absolute;
    ${p => p.$side}: -5px;
    top: 50%;
    margin-top: -3px;
    width: 5px;
    height: 7px;
    border: 1px solid #111;
    border-${p => (p.$side === "left" ? "right" : "left")}: 0;
    border-radius: ${p => (p.$side === "left" ? "4px 0 0 4px" : "0 4px 4px 0")};
    background: #fff;
  }
`;
const Jag = styled.svg`
  position: absolute;
  right: -3px;
  top: -1px;
`;
const Badge = styled.i`
  position: absolute;
  right: 2px;
  top: 3px;
  width: 12px;
  height: 12px;
  border: 1px solid #555;
  border-radius: 2px;
  background: #d8d8de;
`;

type NodeData = { id: string; label: string; x: number; y: number; w: number; h: number; cx: number; ins: string; outs: string; green?: boolean; badge?: boolean };
const nodes: NodeData[] = [
  { id: "wires", label: "Wires", x: 606, y: 269, w: 57, h: 42, cx: 16, ins: "BD", outs: "W", green: true },
  { id: "item", label: "Item", x: 700, y: 279, w: 52, h: 52, cx: 18, ins: "LiW", outs: "i" },
  { id: "divide", label: "Divide", x: 787, y: 295, w: 66, h: 52, cx: 16, ins: "CNK", outs: "PTt", badge: true },
  { id: "ab", label: "A/B", x: 699, y: 355, w: 53, h: 35, cx: 15, ins: "AB", outs: "R" },
  { id: "neg", label: "Neg", x: 791, y: 356, w: 50, h: 34, cx: 14, ins: "x", outs: "y" },
  { id: "z", label: "Z", x: 906, y: 361, w: 52, h: 23, cx: 14, ins: "F", outs: "V" },
  { id: "move", label: "Move", x: 988, y: 294, w: 55, h: 41, cx: 16, ins: "GT", outs: "GX" },
  { id: "vec", label: "Vec2Pt", x: 1110, y: 295, w: 54, h: 52, cx: 16, ins: "ABU", outs: "VL" },
  { id: "d1", label: "VDisEx", x: 1275, y: 283, w: 41, h: 68, cx: 18, ins: "PVCW", outs: "" },
  { id: "x", label: "X", x: 1072, y: 453, w: 52, h: 24, cx: 14, ins: "F", outs: "V" },
  { id: "r1", label: "Rad", x: 1073, y: 483, w: 54, h: 32, cx: 16, ins: "D", outs: "R" },
  { id: "v1", label: "VRot", x: 1188, y: 439, w: 53, h: 52, cx: 15, ins: "VXA", outs: "V" },
  { id: "d2", label: "VDisEx", x: 1277, y: 439, w: 41, h: 68, cx: 18, ins: "PVCW", outs: "" },
  { id: "y", label: "Y", x: 1069, y: 564, w: 52, h: 23, cx: 14, ins: "F", outs: "V" },
  { id: "r2", label: "Rad", x: 1070, y: 592, w: 54, h: 32, cx: 16, ins: "D", outs: "R" },
  { id: "v2", label: "VRot", x: 1184, y: 548, w: 53, h: 52, cx: 15, ins: "VXA", outs: "V" },
  { id: "d3", label: "VDisEx", x: 1279, y: 548, w: 41, h: 68, cx: 18, ins: "PVCW", outs: "" },
];

const zigzag = Array.from({ length: 24 }, (_, i) => `${i % 2 ? 2 : 5},${i * 3}`).join(" ");

const GraphNode = (n: NodeData) => (
  <NodeBox $x={n.x} $y={n.y} $w={n.w} $h={n.h} $cx={n.cx} $green={n.green}>
    <Ports>{n.ins.split("").map(p => <Port key={p} $side="left">{p}</Port>)}</Ports>
    <Core $green={n.green}><span>{n.label}</span></Core>
    <Ports $room={n.badge}>{n.outs.split("").map(p => <Port key={p} $side="right">{p}</Port>)}</Ports>
    {n.badge && <Badge><svg width="10" height="10" fill="none" stroke="#333"><path d="M5 1V8M2 5L5 8L8 5" /></svg></Badge>}
    {!n.outs && <Jag width="6" height="68"><polyline points={`6,0 ${zigzag} 6,68`} fill="#d4cfc6" stroke="#555" /></Jag>}
  </NodeBox>
);

const SliderBox = styled.label<{ $x: number; $y: number; $w: number; $lw: number }>`
  position: absolute;
  left: ${p => p.$x - 565}px;
  top: ${p => p.$y - 198}px;
  width: ${p => p.$w}px;
  height: 17px;
  display: grid;
  grid-template-columns: ${p => p.$lw}px 1fr;
  border: 1px solid #3a3a3a;
  border-radius: 3px;
  background: linear-gradient(#f2f2f2, #c6c6c6);
  box-shadow: 1px 2px 3px rgba(0, 0, 0, 0.3);
  font: 9px/14px "Open Sans", sans-serif;
  text-align: center;
  color: #222;
  &::after {
    content: "";
    position: absolute;
    right: -5px;
    top: 4px;
    width: 5px;
    height: 7px;
    border: 1px solid #111;
    border-left: 0;
    border-radius: 0 4px 4px 0;
    background: #fff;
  }
`;
const SliderName = styled.span`
  background: linear-gradient(#b9b9c6, #8e8ea2);
  border-right: 1px solid #333;
  border-radius: 2px 0 0 2px;
`;
const Track = styled.span<{ $at: number }>`
  position: relative;
  display: block;
  input {
    appearance: none;
    display: block;
    width: 82px;
    height: 7px;
    margin: 4px 0 0 7px;
    background: repeating-linear-gradient(90deg, #aaa 0 1px, transparent 1px 10px) 0 0 / 100% 4px no-repeat, linear-gradient(#aaa, #aaa) 0 4px / 100% 1px no-repeat;
  }
  input::-webkit-slider-thumb {
    appearance: none;
    width: 5px;
    height: 5px;
    border: 1px solid #000;
    background: #fff;
    transform: rotate(45deg);
  }
  output {
    position: absolute;
    left: ${p => p.$at}px;
    top: 0;
    line-height: 13px;
    padding: 0 1px;
    background: linear-gradient(#eee, #cecece);
  }
`;
const sliders = [
  { name: "Count", x: 621, y: 337, w: 132, lw: 34, pct: 18, text: "20", at: 28 },
  { name: "Degrees", x: 918, y: 490, w: 140, lw: 43, pct: 6, text: "90", at: 19 },
  { name: "Degrees", x: 916, y: 599, w: 139, lw: 42, pct: 26, text: "270", at: 34 },
];

const doubles = [
  "M853 305H988", "M853 305C960 305 1000 321 1110 321", "M1043 305H1110", "M1043 305C1120 305 1170 293 1275 293",
  "M1043 305C1160 305 1160 449 1277 449", "M1043 305C1225 305 1097 557 1279 557",
  "M1164 309H1275", "M1164 309C1270 309 1082 449 1188 449", "M1164 309C1348 309 1000 557 1184 557",
  "M1241 464H1277", "M1237 573H1279",
];
const singles = [
  "M565 362L699 364", "M752 345C770 345 770 321 787 321", "M752 372H791", "M841 372H906", "M958 372C987 372 958 323 988 323",
  "M1124 465H1188", "M1127 498C1155 498 1160 481 1188 481", "M1058 498H1073", "M1121 575L1184 573", "M1124 607C1152 607 1156 590 1184 590", "M1055 607H1070",
];

const Graph = () => (
  <Canvas>
    <Wires width="794" height="506" viewBox="565 198 794 506" fill="none">
      <path d="M565 276L606 278V281L565 284Z" fill="#6fcb1c" />
      <g stroke="#6aa53c" strokeWidth="2" strokeOpacity=".6">
        <path d="M565 557C582 600 595 650 600 704M565 623L599 704M565 657L587 704" />
        <path d="M565 570C590 620 595 660 565 697" stroke="#7f9468" />
      </g>
      {doubles.map(d => (
        <g key={d}>
          <path d={d} stroke="#3c3c3a" strokeWidth="4" strokeOpacity=".7" />
          <path d={d} stroke="#9e9b93" strokeWidth="1" />
        </g>
      ))}
      {singles.map(d => <path key={d} d={d} stroke="#5c5a56" strokeWidth="2" />)}
      <path d="M665 289H700" stroke="#79b050" strokeWidth="4" strokeDasharray="9 5" /><path d="M666 289H700" stroke="#b8d69c" strokeWidth="1" strokeDasharray="7 7" />
      <path d="M754 305H787" stroke="#5c5a56" strokeWidth="4" strokeDasharray="9 5" /><path d="M755 305H787" stroke="#aaa69e" strokeWidth="1" strokeDasharray="7 7" />
      <rect x="564" y="675" width="7" height="27" fill="url(#gKnob)" stroke="#000" />
      <path d="M1307 680C1302 664 1314 652 1326 651" stroke="#000" strokeWidth="4" /><path d="M1296 666L1302 662L1307 668L1301 671Z" fill="#000" />
      <circle cx="1327" cy="672" r="19" fill="url(#gDial)" stroke="#fff" strokeWidth="2" /><circle cx="1327" cy="672" r="20" stroke="#444" />
      <path d="M1328 653L1334 655L1330 659ZM1345 673V679L1341 676ZM1322 690L1327 691L1324 686ZM1308 666V672L1313 669Z" fill="#fff" />
    </Wires>
    {nodes.map(n => <GraphNode key={n.id} {...n} />)}
    {sliders.map(s => (
      <SliderBox key={s.y} $x={s.x} $y={s.y} $w={s.w} $lw={s.lw}>
        <SliderName>{s.name}</SliderName>
        <Track $at={s.at}><input type="range" defaultValue={s.pct} /><output>{s.text}</output></Track>
      </SliderBox>
    ))}
  </Canvas>
);

const Defs = styled.svg`
  position: absolute;
  width: 0;
  height: 0;
`;
const GradientDefs = () => (
  <Defs>
    <defs>
      <radialGradient id="gRed" cx=".35" cy=".35"><stop offset="0" stopColor="#ff9a9a" /><stop offset=".3" stopColor="#e8262c" /><stop offset="1" stopColor="#b00006" /></radialGradient>
      <radialGradient id="gBlue" cx=".35" cy=".35"><stop offset="0" stopColor="#8fc6ff" /><stop offset=".3" stopColor="#1f70d8" /><stop offset="1" stopColor="#063a86" /></radialGradient>
      <radialGradient id="gSky" cx=".35" cy=".35"><stop offset="0" stopColor="#d8eeff" /><stop offset="1" stopColor="#5398d8" /></radialGradient>
      <radialGradient id="gGlow"><stop offset=".4" stopColor="#35f08c" /><stop offset="1" stopColor="#35f08c" stopOpacity="0" /></radialGradient>
      <radialGradient id="gDial"><stop offset="0" stopColor="#eee" /><stop offset="1" stopColor="#aaa" /></radialGradient>
      <linearGradient id="gPale" x1="0" x2="1" y1="0" y2="1"><stop offset="0" stopColor="#a9bbf6" /><stop offset="1" stopColor="#6a84e2" /></linearGradient>
      <linearGradient id="gFire" x1="1" x2="0" y1="0" y2="1"><stop offset="0" stopColor="#ffd23c" /><stop offset="1" stopColor="#f08a10" /></linearGradient>
      <linearGradient id="gHex" x1="0" x2="0" y1="0" y2="1"><stop offset="0" stopColor="#555" /><stop offset=".5" stopColor="#222" /><stop offset="1" stopColor="#111" /></linearGradient>
      <linearGradient id="gTile" x1="0" x2="0" y1="0" y2="1"><stop offset="0" stopColor="#777" /><stop offset="1" stopColor="#f0f0f0" /></linearGradient>
      <linearGradient id="gPink" x1="0" x2="1"><stop offset="0" stopColor="#ff9fd2" /><stop offset="1" stopColor="#d00e70" /></linearGradient>
      <linearGradient id="gKnob" x1="0" x2="0" y1="0" y2="1"><stop offset="0" stopColor="#ddd" /><stop offset=".5" stopColor="#666" /><stop offset="1" stopColor="#bbb" /></linearGradient>
      <radialGradient id="gShine"><stop offset="0" stopColor="#e59096" stopOpacity=".5" /><stop offset="1" stopColor="#e59096" stopOpacity="0" /></radialGradient>
    </defs>
  </Defs>
);

export default function App() {
  return (
    <Desktop>
      <Global />
      <GradientDefs />
      <RhinoTitle>
        <svg width="16" height="16" viewBox="0 0 16 16"><rect width="16" height="16" fill="#222" /><path d="M1 3L4 6L7 4L9 7L13 4L15 9L11 10L9 14L5 11L1 9Z" fill="#ddd" /><path d="M9 7L14 2" stroke="#eee" /></svg>
        <span>- Rhinoceros (Corporate) - [Perspective]</span>
      </RhinoTitle>
      <RhinoMenu>
        {["File", "Edit", "View", "Curve", "Surface", "Solid", "Mesh", "Dimension", "Transform", "Tools", "Analyze", "Render"].map(m => <button key={m}>{m}</button>)}
      </RhinoMenu>
      <CommandArea>
        <Grip />
        <CommandStack>
          <History>Command: Grasshopper</History>
          <Prompt>Command:<input aria-label="Command" /></Prompt>
        </CommandStack>
      </CommandArea>
      <Bar $h={54}>
        <Grip />
        <BarBody>
          <ToolTabs>
            {["Standard", "CPlanes", "Set View", "Display", "Select", "Viewport Layout", "Visibility", "Transform", "Curve Tools"].map((t, i) => <ToolTab key={t} $on={!i}>{t}</ToolTab>)}
            <svg width="14" height="14" fill="none" stroke="#777"><circle cx="6" cy="7" r="4" strokeWidth="2" strokeDasharray="2 1" /><circle cx="6" cy="7" r="2" /></svg>
          </ToolTabs>
          <IconRow $white>{standardTools.map(t => <Tool key={t.name} {...t} />)}</IconRow>
        </BarBody>
      </Bar>
      <Bar $h={40} $light>
        <Grip />
        <IconRow>{renderTools.map(t => <Tool key={t.name} {...t} />)}</IconRow>
      </Bar>
      <Work>
        <Side>
          <SideGrip />
          <SideGrid>{sideTools.map((t, i) => <Tool key={i} {...t} />)}</SideGrid>
        </Side>
        <ViewColumn>
          <Viewport>
            <Shell />
            <ViewLabel>Perspective<svg width="11" height="16"><path d="M2 6H10L6 11Z" fill="#111" /></svg></ViewLabel>
          </Viewport>
          <ViewTabs>
            {["Perspective", "Top", "Front", "Right"].map((t, i) => <ViewTab key={t} $on={!i}>{t}</ViewTab>)}
            <ViewTab aria-label="Add view"><svg width="14" height="10" fill="none" stroke="#555"><path d="M5 1H8V4H11V6H8V9H5V6H2V4H5Z" /></svg></ViewTab>
          </ViewTabs>
        </ViewColumn>
      </Work>
      <Status>
        <Cell $w={57}>CPlane</Cell><Cell $w={88}>x 1248.223</Cell><Cell $w={88}>y -559.011</Cell><Cell $w={88}>z 0.000</Cell><Cell $w={88}>Centimeters</Cell>
        <Layer>Default</Layer>
      </Status>

      <Window>
        <WinTitle>
          <span>Grasshopper -</span>
          <WinButtons>
            {[["Minimize", "M1 6H11"], ["Maximize", "M1 1H11V11H1Z"], ["Close", "M1 1L11 11M11 1L1 11"]].map(([n, d]) => (
              <button key={n} aria-label={n}><svg width="12" height="12" viewBox="-.5 -.5 12 12" fill="none" stroke="#000"><path d={d} /></svg></button>
            ))}
          </WinButtons>
        </WinTitle>
        <WinMenu>{["File", "Edit", "View", "Display", "Solution", "Help"].map(m => <button key={m}>{m}</button>)}</WinMenu>
        <RibbonTabs>
          {["Params", "Maths", "Sets", "Vector", "Curve", "Surface", "Mesh", "Intersect", "Transform", "Display", "Wb"].map((t, i) => <RibbonTab key={t} $on={!i}>{t}</RibbonTab>)}
        </RibbonTabs>
        <Ribbon>
          {panels.map(p => (
            <Panel key={p.title}>
              <PanelGrid>
                {p.groups.map((g, i) => (
                  <PanelGroup key={i} $cols={g.cols}>
                    {g.items.map((it, k) => <ToolButton key={k} aria-label={`${p.title} ${k + 1}`}>{it}</ToolButton>)}
                  </PanelGroup>
                ))}
              </PanelGrid>
              <Caption><span>{p.title}</span><svg width="7" height="7" stroke="#aaa" strokeWidth="2"><path d="M3 0V6M0 3H6" /></svg></Caption>
            </Panel>
          ))}
        </Ribbon>
        <CanvasBar>
          <Tool name="Open" art={<><path d="M22 40V14L30 8H64V40" fill="#fff" stroke="#888" /><path d="M12 40H24L30 34H68V70H12Z" fill="#63b53c" stroke="#2b7a14" /><path d="M14 50H66" stroke="#b8e89c" strokeWidth={2} /></>} />
          <Pad $w={3} />
          <Tool name="Save" art={<><path d="M10 10H74V74H16L10 68Z" fill="#2f74d8" stroke="#123a80" /><path d="M20 12H62V38H20Z" fill="#eef" stroke="none" /><path d="M26 20H56M26 28H56" stroke="#bbb" /><path d="M24 50H58V74H24Z" fill="#ddd" stroke="none" /><path d="M30 54H40V70H30Z" fill="#123a80" stroke="none" /></>} />
          <Divider $gap={4} />
          <ZoomBox>
            <select aria-label="Zoom" defaultValue="80%"><option>80%</option><option>100%</option></select>
            <svg width="9" height="6" fill="none" stroke="#444"><path d="M0 0L4 5L9 0" /></svg>
          </ZoomBox>
          <Pad $w={2} />
          <Tool name="Fit" art={<><path d="M34 18H18V34M50 18H66V34M34 66H18V50M50 66H66V50" strokeWidth="8" /><path d="M36 36L48 48M48 36L36 48" strokeWidth="4" /></>} />
          <Caret before={1} after={5} />
          <Tool name="Preview" art={<><path d="M10 42Q42 4 74 42Q42 76 10 42Z" fill="#e8f4fa" stroke="#445" strokeWidth="4" /><circle cx="42" cy="42" r="17" fill="#3aa5d8" stroke="#1a5a84" /><circle cx="42" cy="42" r="8" fill="#111" /></>} />
          <Caret before={3} after={4} />
          <Tool name="Sketch" art={<><path d="M10 46Q28 40 20 56T30 72H42" strokeWidth="4" stroke="#421" /><path d="M32 70L34 46L62 12L76 20L74 38L50 64Z" fill="#e2302c" stroke="#8c1210" /><path d="M42 42L66 18" stroke="#ff9a8c" strokeWidth="5" /><path d="M32 70L34 48L50 62Z" fill="#f7c890" stroke="#8c5210" /></>} />
          <Spring />
          <Tool name="No preview" art={<><path d="M16 36L36 12Q60 6 66 30L52 50H26Z" fill="#ccc" stroke="#888" /><ellipse cx="52" cy="24" rx="15" ry="10" transform="rotate(40 52 24)" fill="#fff" stroke="#888" /><path d="M14 54Q42 34 68 54L62 68Q42 78 20 68Z" fill="#333" /></>} />
          <Pad $w={1} />
          <Tool name="Wireframe preview" art={<>{can("#fff", "#fff")}<ellipse cx="30" cy="55" rx="16" ry="10" transform="rotate(42 30 55)" stroke="#555" /></>} />
          <PickedTool><Tool name="Shaded preview" art={<>{can("#c8141a", "#8c0a0e", "#6a0408")}<path d="M20 44L40 20" stroke="#f06a6a" strokeWidth="5" /></>} /></PickedTool>
          <Divider $gap={8} />
          <Tool name="Selected only" art={<>{can("#d8d8d8", "#777", "#777")}<path d="M26 26L38 12Q62 4 74 34L62 52Z" fill="#5fb81f" stroke="#2f7008" /><ellipse cx="57" cy="25" rx="12" ry="7" transform="rotate(42 57 25)" fill="#2f7008" stroke="#9fe060" /><path d="M14 18L68 72" strokeWidth="4" /></>} />
          <Tool name="Document preview" art={<><circle cx="42" cy="42" r="29" fill="#e6e6e6" stroke="#444" /><path d="M42 13A29 29 0 0 0 42 71Z" fill="#f08a24" stroke="#7a3804" /></>} />
          <Divider $gap={1} />
          <Tool name="Mesh quality" art={<path d="M42 16L62 22L70 42L62 62L42 70L22 62L14 42L22 22Z" fill="url(#gSky)" stroke="#163c78" strokeWidth="4" />} />
          <Caret />
        </CanvasBar>
        <Graph />
        <WinStatus>
          <span>_</span>
          <span>0.9.0076<svg width="12" height="14" fill="#999"><path d="M10 2h2v2h-2zM10 6h2v2h-2zM10 10h2v2h-2zM6 6h2v2H6zM6 10h2v2H6zM2 10h2v2H2z" /></svg></span>
        </WinStatus>
      </Window>
    </Desktop>
  );
}
